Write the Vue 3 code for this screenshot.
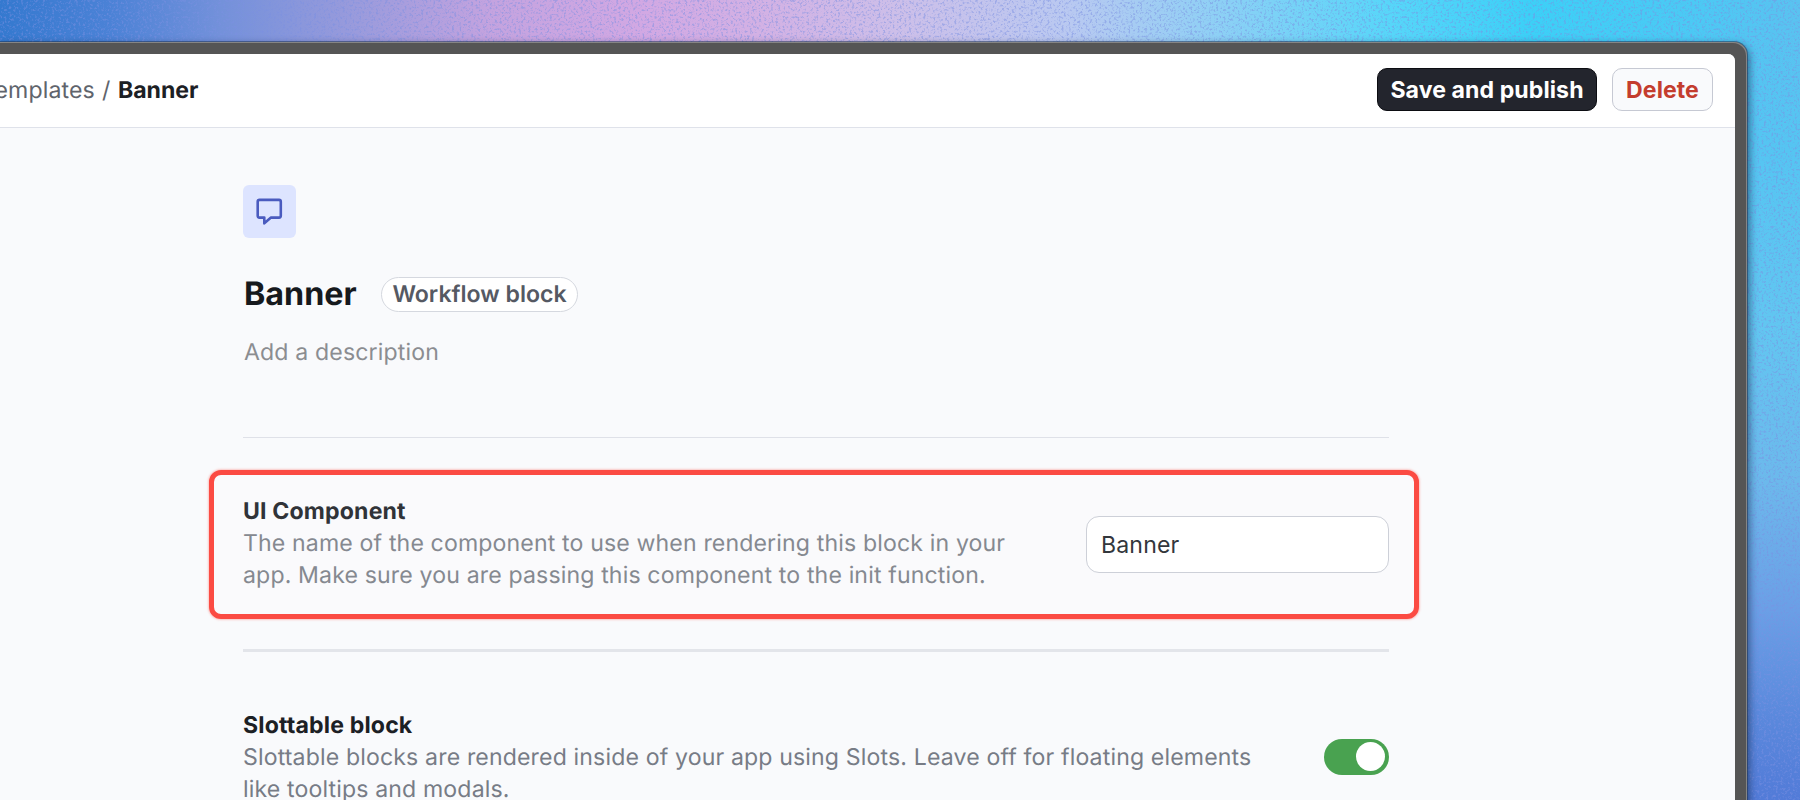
<script setup>
import { ref } from 'vue'

const component = ref('Banner')
const slottable = ref(true)
</script>

<template>
  <div class="desktop">
    <svg class="grain" width="1800" height="800" aria-hidden="true">
      <filter id="grain" x="0" y="0" width="100%" height="100%">
        <feTurbulence type="fractalNoise" baseFrequency="0.42" numOctaves="3" seed="4" />
        <feColorMatrix values="0 0 0 0 0.2  0 0 0 0 0.28  0 0 0 0 0.76  4.5 0 0 0 -2.3" />
      </filter>
      <rect width="1800" height="800" filter="url(#grain)" />
    </svg>
    <div class="window">
      <div class="screen">
        <header class="topbar">
          <div class="crumbs"><span>Templates</span><span class="slash">/</span><strong>Banner</strong></div>
          <div class="actions">
            <button class="btn primary">Save and publish</button>
            <button class="btn danger">Delete</button>
          </div>
        </header>
        <main class="content">
          <div class="block-icon">
            <svg width="30" height="30" viewBox="0 0 30 30" fill="none" stroke="#4a5bbf" stroke-width="2.6" stroke-linejoin="round">
              <path d="M5.5 2.9H25Q26.8 2.9 26.8 4.7V18.8Q26.8 20.6 25 20.6H17L10.3 26.3V20.6H5.5Q3.7 20.6 3.7 18.8V4.7Q3.7 2.9 5.5 2.9Z" />
            </svg>
          </div>
          <div class="title-row">
            <h1>Banner</h1>
            <span class="badge">Workflow block</span>
          </div>
          <p class="description">Add a description</p>
          <hr class="rule" />
          <section class="setting highlighted">
            <div class="copy">
              <h2>UI Component</h2>
              <p>The name of the component to use when rendering this block in your<br />app. Make sure you are passing this component to the init function.</p>
            </div>
            <input v-model="component" class="field" type="text" />
          </section>
          <hr class="rule thick" />
          <section class="setting">
            <div class="copy">
              <h2>Slottable block</h2>
              <p>Slottable blocks are rendered inside of your app using Slots. Leave off for floating elements<br />like tooltips and modals.</p>
            </div>
            <button class="toggle" :class="{ on: slottable }" aria-label="Slottable block" @click="slottable = !slottable"><i></i></button>
          </section>
        </main>
      </div>
    </div>
  </div>
</template>

<style>
body { overflow: hidden; }
</style>

<style scoped>
* { box-sizing: border-box; margin: 0; }
.desktop {
  position: relative;
  width: 1800px;
  height: 800px;
  overflow: hidden;
  padding-top: 42px;
  font-family: Inter, "Liberation Sans", sans-serif;
  font-size: 23.1px;
  letter-spacing: .14px;
  text-rendering: geometricPrecision;
  line-height: 32px;
  background:
    linear-gradient(180deg, rgba(88,201,243,0) 30px, #55c5f2 150px, #62c6f1 330px, #6cb9ec 480px, #6b9fe6 610px, #5a88dc 720px, #527bd8 800px) right / 60px 100% no-repeat,
    linear-gradient(90deg, #3479cf 0, #4b82d6 110px, #7391da 220px, #9b9bdc 360px, #c4a3df 490px, #d2a8e3 640px, #d3b1e4 760px, #cdbfe9 900px, #b9c9f1 1070px, #8dd0f5 1220px, #57d6f9 1390px, #3cd0f7 1530px, #4cc9f4 1700px, #5ac2f0 1800px);
}
.grain { position: absolute; inset: 0; opacity: .5; }
.window {
  position: relative;
  width: 1747px;
  height: 780px;
  padding: 12px 12px 0 0;
  border-radius: 0 13px 0 0;
  background: #555;
  box-shadow: inset -1px 1px 0 #858585, 0 0 0 1px rgba(30,50,80,.5), 2px 3px 8px rgba(10,30,60,.6);
}
.screen { height: 100%; border-radius: 0 7px 0 0; overflow: hidden; background: #f9fafc; }
.topbar {
  display: flex;
  align-items: center;
  justify-content: space-between;
  height: 74px;
  padding: 0 22px 2px 0;
  border-bottom: 1px solid #dfe2ea;
  background: #fff;
}
.crumbs { display: flex; justify-content: flex-end; width: 198.5px; color: #60646c; }
.slash { margin: 0 7.5px 0 7px; }
.crumbs strong { font-weight: 700; letter-spacing: 0; color: #1c2024; }
.actions { display: flex; gap: 15px; }
.btn {
  height: 43px;
  padding: 0;
  border-radius: 10px;
  font: 700 23.1px/32px Inter, sans-serif;
  letter-spacing: .08px;
  white-space: nowrap;
}
.primary { width: 220px; border: 1px solid #0c0d12; background: #23252d; color: #fff; }
.danger { width: 101px; border: 1px solid #c6c9d3; background: #f9fafc; color: #c43d2e; }
.content { width: 1146px; margin-left: 243px; padding-top: 57px; }
.block-icon {
  display: flex;
  align-items: center;
  justify-content: center;
  width: 52.5px;
  height: 53px;
  border-radius: 6px;
  background: #dde4ff;
}
.title-row { display: flex; align-items: center; height: 36px; margin-top: 38px; padding-left: 1px; }
h1 { width: 137px; font-size: 32.3px; letter-spacing: 0; font-weight: 700; line-height: 36px; color: #16191d; }
.badge {
  width: 197px;
  height: 35px;
  border: 1px solid #d5d8df;
  border-radius: 18px;
  background: #fff;
  color: #555963;
  font-weight: 600;
  letter-spacing: 0;
  line-height: 33px;
  text-align: center;
  white-space: nowrap;
}
.description { margin-top: 24px; padding-left: 1px; color: #8b8d91; }
.rule { height: 1px; margin-top: 69px; border: 0; background: #dfe1e8; }
.setting { display: flex; align-items: center; justify-content: space-between; margin-top: 57px; }
.highlighted {
  height: 149px;
  margin: 32px -30px 0 -34px;
  padding: 0 25px 0 29px;
  border: 5px solid #fb4b43;
  border-radius: 12px;
  background: #fafafc;
  box-shadow: 0 0 2px 1px rgba(251,75,67,.3);
}
.copy { white-space: nowrap; }
h2 { font-size: 23.1px; letter-spacing: .15px; line-height: 32px; font-weight: 700; color: #1c2024; }
.highlighted h2 { color: #303338; }
.copy p { line-height: 32.3px; color: #777c86; }
.highlighted .copy { margin-top: -3px; }
.highlighted .copy p { color: #858990; }
.field {
  width: 303px;
  height: 57px;
  padding: 0 14px;
  border: 1px solid #cdd0d8;
  border-radius: 13px;
  background: #fff;
  color: #33373c;
  font: 400 23.1px/32px Inter, sans-serif;
  letter-spacing: .14px;
  outline: 0;
}
.thick { height: 3px; margin-top: 30px; background: #e3e5ea; }
.toggle { width: 65px; height: 36px; margin-bottom: 1px; padding: 3px; border: 0; border-radius: 18px; background: #b9bbc6; }
.toggle i { display: block; width: 29px; height: 29px; border-radius: 50%; background: #fff; }
.toggle.on { background: #49a250; }
.toggle.on i { margin-left: 29px; }
</style>
